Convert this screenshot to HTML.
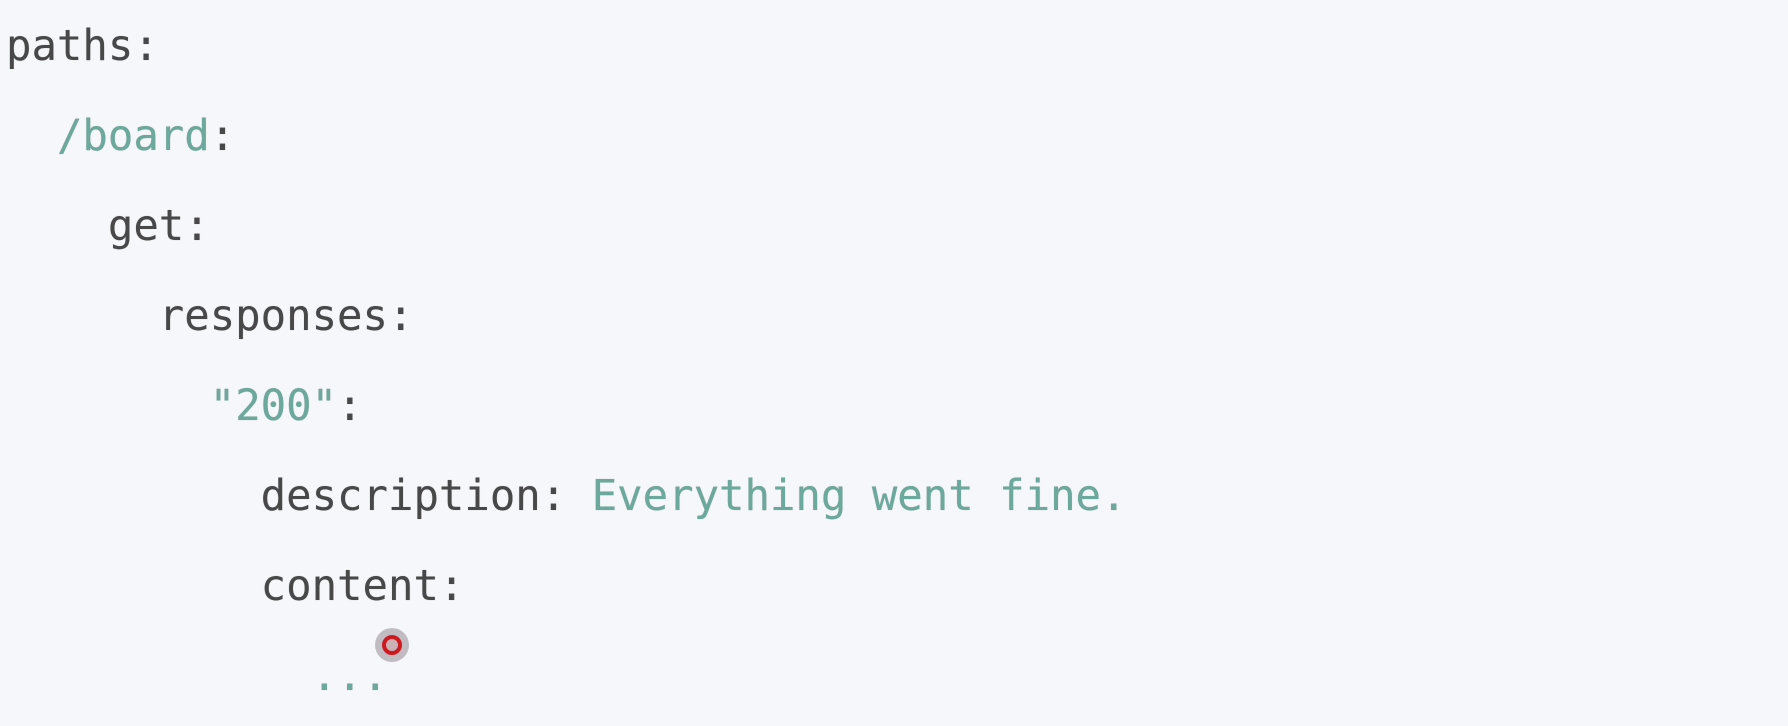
<!DOCTYPE html>
<html><head><style>
html,body{margin:0;padding:0;background:#f6f7fa;width:1788px;height:726px;overflow:hidden}
pre{margin:0;position:absolute;left:6px;top:1px;font-family:"DejaVu Sans Mono","Liberation Mono",monospace;font-size:42.3px;line-height:90px;color:#48484a;text-shadow:0 0 0.6px rgba(72,72,74,0.6)}
.t{color:#6aa99b}
.c{position:absolute;left:375px;top:628px;width:34px;height:34px;border-radius:50%;background:rgba(150,140,145,0.55)}
.c:after{content:"";position:absolute;left:7px;top:7px;width:12px;height:12px;border:4px solid #cc1a20;border-radius:50%;background:rgba(210,170,175,0.6)}
</style></head><body>
<pre>paths:
  <span class="t">/board</span>:
    get:
      responses:
        <span class="t">"200"</span>:
          description: <span class="t">Everything went fine.</span>
          content:
            <span class="t">...</span></pre>
<div class="c"></div>
</body></html>
